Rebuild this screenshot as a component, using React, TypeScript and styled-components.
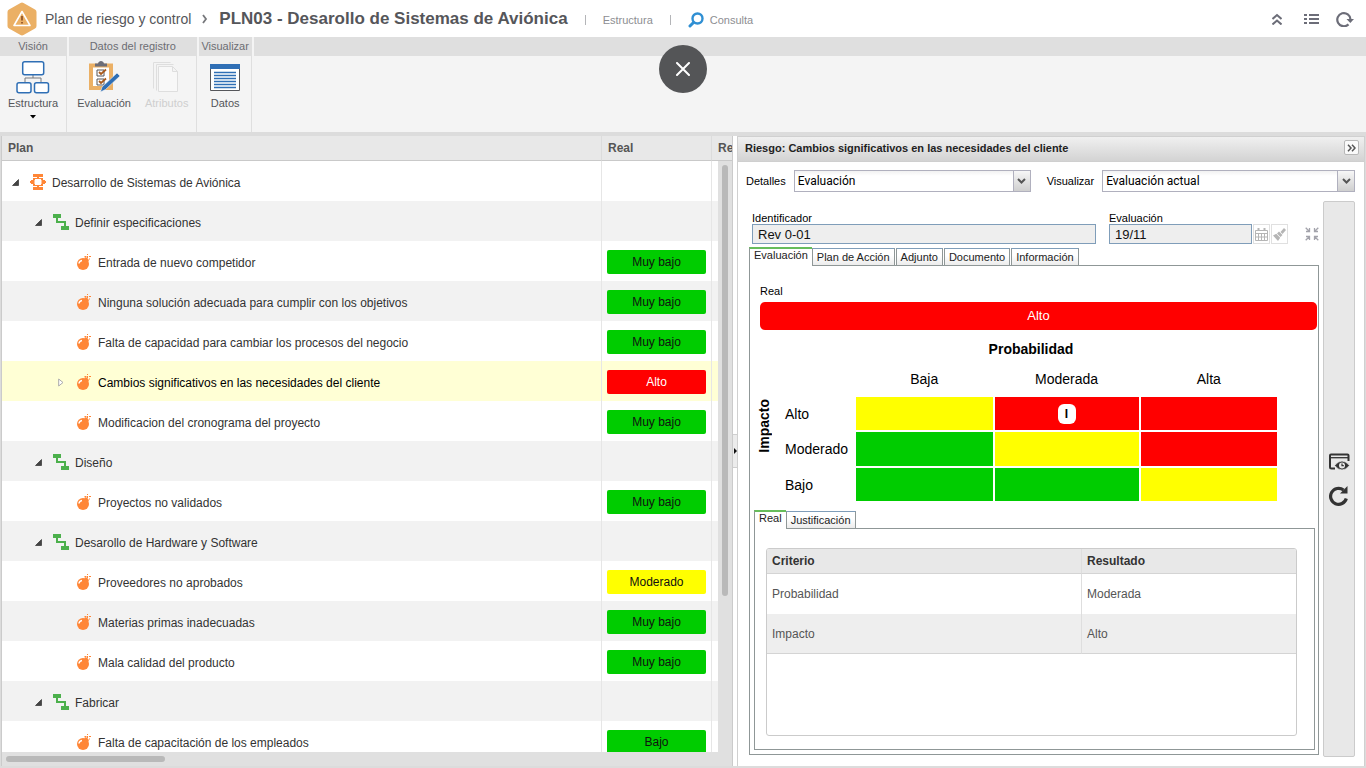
import React from "react";
import styled, { createGlobalStyle, css } from "styled-components";

const GlobalStyle = createGlobalStyle`
  *, *::before, *::after { box-sizing: border-box; }
  body {
    margin: 0;
    background: #dcdcdc;
    font-family: "Liberation Sans", Arial, sans-serif;
    font-size: 12px;
    color: #333;
  }
  button, input, select { font-family: inherit; }
  button { cursor: pointer; }
  svg { display: block; flex: none; }
`;

const Page = styled.div`
  position: relative;
  display: flex;
  flex-direction: column;
  height: 100vh;
  overflow: hidden;
`;

/* ---------- top bar ---------- */

const TopBar = styled.header`
  display: flex;
  align-items: center;
  height: 37px;
  flex: none;
  padding: 0 4px 0 7px;
  background: #fff;
`;

const Crumb = styled.a`
  margin-left: 8px;
  font-size: 14px;
  line-height: 20px;
  color: #55565a;
  text-decoration: none;
`;

const CrumbMark = styled.span`
  display: flex;
  margin: 0 11px;
`;

const Title = styled.h1`
  margin: 0;
  font-size: 17px;
  line-height: 20px;
  color: #55565a;
  white-space: nowrap;
`;

const TopLinks = styled.nav`
  display: flex;
  align-items: center;
  margin-left: 17px;
  padding-top: 2px;
`;

const TopLink = styled.a`
  display: flex;
  align-items: center;
  gap: 6px;
  margin: 0 17px;
  font-size: 11px;
  line-height: 16px;
  color: #8d8e92;
  text-decoration: none;
`;

const Separator = styled.span`
  width: 1px;
  height: 10px;
  background: #b4b5b8;
`;

const PlainButton = styled.button`
  display: flex;
  align-items: center;
  justify-content: center;
  padding: 0;
  border: 0;
  background: none;
`;

const TopActions = styled.div`
  display: flex;
  align-items: center;
  margin-left: auto;
`;

const TopAction = styled(PlainButton)`
  width: 34px;
  height: 24px;
`;

/* ---------- ribbon ---------- */

const Ribbon = styled.section`
  display: flex;
  gap: 2px;
  height: 95px;
  flex: none;
  background: #f4f4f4;
`;

const Group = styled.div<{ $grow?: boolean }>`
  display: flex;
  flex-direction: column;
  flex: ${(p) => (p.$grow ? "1" : "none")};
  border-right: ${(p) => (p.$grow ? "0" : "1px solid #dfdfdf")};
`;

const GroupTitle = styled.h2`
  height: 19px;
  margin: 0;
  padding: 0 2px;
  background: #dfdfdf;
  font-size: 11px;
  font-weight: normal;
  line-height: 19px;
  text-align: center;
  color: #6c6d73;
`;

const GroupItems = styled.div`
  display: flex;
  gap: 14px;
  justify-content: center;
  padding: 4px 8px 0;
`;

const Tool = styled.button`
  display: flex;
  flex-direction: column;
  align-items: center;
  gap: 2px;
  padding: 0;
  border: 0;
  background: none;
  font-size: 11px;
  line-height: 14px;
  color: #55565a;
  &:disabled { color: #cfcfcf; cursor: default; }
`;

const ToolCaret = styled.span`
  display: flex;
  padding-top: 3px;
`;

const CloseButton = styled.button`
  position: absolute;
  z-index: 5;
  top: 45px;
  left: 50%;
  display: flex;
  align-items: center;
  justify-content: center;
  width: 48px;
  height: 48px;
  margin-left: -24px;
  padding: 0;
  border: 0;
  border-radius: 50%;
  background: #545557;
`;

/* ---------- workspace ---------- */

const Workspace = styled.main`
  display: grid;
  grid-template-columns: minmax(0, 732fr) 4px minmax(0, 628fr);
  flex: 1;
  min-height: 0;
  padding: 4px 1px 2px 1px;
`;

const TreePane = styled.section`
  position: relative;
  display: flex;
  flex-direction: column;
  min-height: 0;
  border: solid #cbcbcb;
  border-width: 0 1px 0 1px;
  background: #fff;
`;

const TreeView = styled.div`
  flex: 1;
  min-height: 0;
  overflow: hidden;
`;

const TreeTable = styled.table`
  width: 100%;
  table-layout: fixed;
  border-collapse: separate;
  border-spacing: 0;
`;

const TreeHead = styled.th<{ $width?: number }>`
  width: ${(p) => (p.$width ? `${p.$width}px` : "auto")};
  height: 25px;
  padding: 0 6px;
  border-right: 1px solid #dcdcdc;
  border-bottom: 1px solid #c9c9c9;
  background: #e8e8e8;
  font-size: 12px;
  text-align: left;
  color: #555;
  overflow: hidden;
  white-space: nowrap;
  &:last-child { border-right: 0; padding-right: 0; }
`;

const TreeRow = styled.tr<{ $tone: "plain" | "band" | "picked" }>`
  background: ${(p) =>
    p.$tone === "picked" ? "#ffffd5" : p.$tone === "band" ? "#f2f2f2" : "#fff"};
  color: ${(p) => (p.$tone === "picked" ? "#000" : "#333")};
`;

const TreeCell = styled.td`
  height: 40px;
  padding: 2px 5px 0;
  border-right: 1px solid #e6e6e6;
  &:last-child { border-right: 0; }
`;

const Node = styled.div<{ $level: number }>`
  display: flex;
  align-items: center;
  gap: 6px;
  padding-left: ${(p) => 5 + p.$level * 23}px;
  white-space: nowrap;
`;

const NodeName = styled.span`
  padding-top: 2px;
  line-height: 16px;
`;

const Toggle = styled.span`
  display: flex;
  width: 12px;
`;

const tones = { green: "#00cc00", red: "#ff0000", yellow: "#ffff00" };
type Tone = keyof typeof tones;

const Badge = styled.div<{ $tone: Tone }>`
  height: 24px;
  border-radius: 2px;
  background: ${(p) => tones[p.$tone]};
  color: ${(p) => (p.$tone === "red" ? "#fff" : "#111")};
  line-height: 24px;
  text-align: center;
`;

const VTrack = styled.div`
  position: absolute;
  top: 25px;
  right: 0;
  bottom: 14px;
  width: 14px;
  padding: 4px;
  background: #e0e0e0;
`;

const VThumb = styled.div`
  height: 74%;
  border-radius: 3px;
  background: #b9b9b9;
`;

const HTrack = styled.div`
  height: 14px;
  flex: none;
  padding: 4px;
  background: #e0e0e0;
`;

const HThumb = styled.div`
  width: 22%;
  height: 6px;
  border-radius: 3px;
  background: #b9b9b9;
`;

const Splitter = styled.div`
  display: flex;
  align-items: center;
  background: #fff;
`;

const Grip = styled.button`
  display: flex;
  align-items: center;
  width: 4px;
  height: 34px;
  padding: 0;
  border: solid #cfcfcf;
  border-width: 1px 0;
  background: #ececec;
`;

/* ---------- detail pane ---------- */

const DetailPane = styled.section`
  display: flex;
  flex-direction: column;
  min-height: 0;
  border: solid #d0d0d0;
  border-width: 1px 1px 0 1px;
  background: #fff;
`;

const DetailHead = styled.div`
  display: flex;
  align-items: center;
  justify-content: space-between;
  height: 25px;
  flex: none;
  padding: 0 5px 3px 7px;
  border-bottom: 1px solid #cfcfcf;
  background: linear-gradient(#f0f0f0, #d3d3d3);
`;

const DetailTitle = styled.h2`
  margin: 0;
  font-size: 11px;
  color: #222;
`;

const ExpandButton = styled(PlainButton)`
  width: 15px;
  height: 15px;
  border: 1px solid #b8b8b8;
  border-radius: 2px;
  background: #fafafa;
`;

const Filters = styled.div`
  display: flex;
  align-items: center;
  gap: 8px;
  padding: 8px 9px 9px 8px;
`;

const FieldLabel = styled.label`
  font-size: 11px;
  line-height: 12px;
  color: #000;
`;

const SelectBox = styled.div<{ $grow: number }>`
  position: relative;
  flex: ${(p) => p.$grow} 1 0;
  & + label { margin-left: 8px; }
`;

const Select = styled.select`
  display: block;
  width: 100%;
  height: 22px;
  padding: 0 20px 0 3px;
  border: 1px solid #b0b0be;
  border-radius: 0;
  appearance: none;
  background: linear-gradient(#f2f2f2, #fff 5px);
  font-family: Roboto, sans-serif;
  font-size: 12px;
  color: #000;
`;

const SelectArrow = styled.span`
  position: absolute;
  top: 1px;
  right: 1px;
  bottom: 1px;
  display: flex;
  align-items: center;
  justify-content: center;
  width: 17px;
  border-left: 1px solid #b0b0be;
  background: linear-gradient(#f7f7f7, #cfcfcf);
  pointer-events: none;
`;

const DetailBody = styled.div`
  display: flex;
  gap: 4px;
  flex: 1;
  min-height: 0;
  padding: 0 9px 9px 11px;
`;

const Form = styled.div`
  display: flex;
  flex-direction: column;
  flex: 1;
  min-width: 0;
  padding: 11px 0 2px;
`;

const SideBar = styled.aside`
  display: flex;
  flex-direction: column;
  align-items: center;
  justify-content: center;
  gap: 14px;
  width: 32px;
  border: 1px solid #cbcbcb;
  border-radius: 2px;
  background: #e8e8e8;
`;

const Fields = styled.div`
  display: flex;
  align-items: flex-end;
  padding: 0 0 3px 3px;
`;

const Field = styled.div<{ $grow: number }>`
  display: flex;
  flex-direction: column;
  flex: ${(p) => p.$grow} 1 0;
  & + & { margin-left: 13px; }
`;

const TextInput = styled.input`
  width: 100%;
  height: 20px;
  padding: 0 5px;
  border: 1px solid #7f9db9;
  border-radius: 0;
  background: #eee;
  font-size: 13px;
  color: #111;
`;

const IconButton = styled(PlainButton)`
  width: 17px;
  height: 20px;
  margin-left: 1px;
  border: 1px solid #e0e0e0;
`;

const ShrinkButton = styled(PlainButton)`
  height: 20px;
  margin-left: 17px;
`;

const Tabs = styled.div`
  position: relative;
  z-index: 1;
  display: flex;
  align-items: flex-end;
  gap: 1px;
  margin-bottom: -1px;
`;

const Tab = styled.button<{ $active?: boolean }>`
  height: 18px;
  padding: 0 4px;
  border: 1px solid #8f9797;
  border-top-color: #7f9db9;
  background: linear-gradient(#fff 40%, #ececec);
  font-size: 11px;
  line-height: 16px;
  color: #222;
  white-space: nowrap;
  ${(p) =>
    p.$active &&
    css`
      height: 19px;
      margin-right: -1px;
      padding-bottom: 5px;
      border-top: 2px solid #67bd5b;
      border-right: 0;
      border-bottom: 0;
      background: #fff;
      line-height: 12px;
    `}
`;

const OuterPanel = styled.div`
  display: flex;
  flex-direction: column;
  flex: 1;
  min-height: 0;
  padding: 18px 3px 4px 4px;
  border: 1px solid #8f9797;
`;

const ResultTitle = styled.h3`
  margin: 0 0 4px 6px;
  font-size: 11px;
  font-weight: normal;
  line-height: 14px;
  color: #000;
`;

const ResultBar = styled.div`
  height: 28px;
  flex: none;
  margin: 0 -2px 4px 6px;
  border-radius: 5px;
  background: #f00;
  font-size: 13px;
  line-height: 28px;
  text-align: center;
  color: #fff;
`;

const MatrixWrap = styled.div`
  flex: none;
  padding-right: 36px;
`;

const Matrix = styled.table`
  width: 100%;
  table-layout: fixed;
  border-spacing: 2px;
  font-size: 14px;
  color: #000;
  th, td { padding: 0; }
  thead th { padding-bottom: 2px; }
  tbody tr:nth-child(2) th { height: 34px; }
`;

const MatrixCol = styled.col<{ $width?: number }>`
  width: ${(p) => (p.$width ? `${p.$width}px` : "auto")};
`;

const AxisX = styled.th`
  height: 27px;
`;

const Level = styled.th`
  height: 30px;
  font-weight: normal;
`;

const RowLevel = styled.th`
  height: 33px;
  font-weight: normal;
  text-align: left;
`;

const AxisY = styled.th`
  vertical-align: middle;
`;

const Upright = styled.span`
  display: inline-block;
  margin: 0 12px 44px 0;
  writing-mode: vertical-rl;
  transform: rotate(180deg);
`;

const MatrixCell = styled.td<{ $tone: Tone }>`
  height: 33px;
  background: ${(p) => tones[p.$tone]};
  text-align: center;
`;

const Marker = styled.span`
  display: inline-block;
  width: 18px;
  border-radius: 6px;
  background: #fff;
  font-size: 12px;
  font-weight: bold;
  line-height: 20px;
`;

const InnerTabs = styled(Tabs)`
  flex: none;
  margin-top: 7px;
`;

const InnerPanel = styled.div`
  flex: 1;
  min-height: 0;
  padding: 19px 17px 13px 11px;
  border: 1px solid #8f9797;
`;

const CriteriaBox = styled.div`
  height: 100%;
  border: 1px solid #cbcbcb;
  border-radius: 3px;
  overflow: hidden;
`;

const Criteria = styled.table`
  width: 100%;
  table-layout: fixed;
  border-collapse: separate;
  border-spacing: 0;
  th, td {
    padding: 0 5px;
    text-align: left;
    font-size: 12px;
  }
  th:first-child, td:first-child { border-right: 1px solid #dedede; }
  th:last-child { width: 214px; }
  th {
    height: 25px;
    border-bottom: 1px solid #d4d4d4;
    background: #e8e8e8;
    color: #333;
  }
  td { height: 40px; color: #555; }
  tr:last-child td { background: #eee; border-bottom: 1px solid #d4d4d4; }
`;

/* ---------- icons ---------- */

const LogoIcon = () => (
  <svg width="30" height="34" viewBox="0 0 30 34">
    <path d="M13.500 1a3 3 0 0 1 3 0l11.500 6.400a3 3 0 0 1 1.500 2.600v14a3 3 0 0 1-1.500 2.600l-11.500 6.400a3 3 0 0 1-3 0L2 26.600A3 3 0 0 1 .5 24V10A3 3 0 0 1 2 7.400z" fill="#ebb065" />
    <path d="M15 9.500L23 23.500H7z" fill="none" stroke="#fff" strokeWidth="1.600" strokeLinejoin="round" />
    <path d="M15 14v4.500M15 20v1.500" stroke="#8a4a20" strokeWidth="1.600" />
  </svg>
);

const CrumbIcon = () => (
  <svg width="6" height="10" viewBox="0 0 6 10">
    <path d="M1 1l3 4-3 4" fill="none" stroke="#77787c" strokeWidth="1.800" />
  </svg>
);

const SearchIcon = () => (
  <svg width="16" height="16" viewBox="0 0 16 16" fill="none" stroke="#2f8fd3">
    <circle cx="9.500" cy="6.500" r="5" strokeWidth="2.400" />
    <path d="M5.500 10.500L2 14" strokeWidth="3" strokeLinecap="round" />
  </svg>
);

const UpIcon = () => (
  <svg width="10" height="12" viewBox="0 0 10 12" fill="none" stroke="#6c6d78" strokeWidth="2">
    <path d="M.5 6L5 2l4.500 4M.5 11.500L5 7.500l4.500 4" />
  </svg>
);

const ListIcon = () => (
  <svg width="15" height="12" viewBox="0 0 15 12" fill="#6c6d78">
    <path d="M0 1h3v2H0zM5 1h10v2H5zM0 5h3v2H0zM5 5h10v2H5zM0 9h3v2H0zM5 9h10v2H5z" />
  </svg>
);

const RefreshIcon = () => (
  <svg width="18" height="16" viewBox="0 0 18 16">
    <path d="M12.500 13.400A6.600 6.600 0 1 1 14.500 8.500" fill="none" stroke="#6c6d78" strokeWidth="2.200" />
    <path d="M10.500 8H18l-3.700 4z" fill="#6c6d78" />
  </svg>
);

const StructureIcon = () => (
  <svg width="34" height="34" viewBox="0 0 34 34" fill="#fff" stroke="#2f6fb5" strokeWidth="1.500">
    <path d="M17 15v3M9 22v-4h16v4" fill="none" stroke="#77787c" strokeWidth="1" />
    <rect x="6.700" y="1.700" width="21" height="13" rx="2" />
    <rect x="1" y="22.700" width="14" height="10" rx="2" />
    <rect x="18.500" y="22.700" width="14" height="10" rx="2" />
  </svg>
);

const EvaluateIcon = () => (
  <svg width="34" height="34" viewBox="0 0 34 34">
    <path d="M4 5.500h20V28H4z" fill="#fff" stroke="#ebb065" strokeWidth="4" />
    <path d="M8 6.500V3.500h3C11.500 0 16.500 0 17 3.500h3v3z" fill="#6c6d78" />
    <path d="M10 10h7v6h-7zM10 19h7v6h-7z" fill="none" stroke="#55565a" />
    <path d="M12 12l2 2 5-4.500M12 21l2 2 5-4.500" fill="none" stroke="#a85a1c" strokeWidth="1.800" />
    <path d="M30 13l3 3L18.500 29.500 13.500 32l1.500-5z" fill="#2f6fb5" stroke="#f4f4f4" strokeWidth=".6" />
  </svg>
);

const AttributesIcon = () => (
  <svg width="34" height="34" viewBox="0 0 34 34" fill="#f8f8f8" stroke="#dedede">
    <path d="M3.500 28.500v-26h17M6.500 30.500v-26h17" fill="none" />
    <path d="M8.500 6.500h14l5 5v20h-19zM22.500 6.500v5h5" />
  </svg>
);

const DataIcon = () => (
  <svg width="34" height="34" viewBox="0 0 34 34">
    <path d="M2.500 4.500h29v26h-29z" fill="#fff" stroke="#55565a" />
    <path d="M2 4h30v5H2z" fill="#2f6fb5" />
    <path d="M6 12.500h22M6 15.500h22M6 18.500h22M6 21.500h22M6 24.500h22M6 27.500h22" stroke="#2f6fb5" strokeWidth="1.500" />
  </svg>
);

const CaretIcon = () => (
  <svg width="6" height="4" viewBox="0 0 6 4"><path d="M0 0h6L3 3.500z" fill="#000" /></svg>
);

const CrossIcon = () => (
  <svg width="14" height="14" viewBox="0 0 14 14" stroke="#fff" strokeWidth="2" strokeLinecap="round">
    <path d="M1 1l12 12M13 1L1 13" />
  </svg>
);

const OpenIcon = () => (
  <svg width="7" height="7" viewBox="0 0 7 7"><path d="M6.500 .5v6H.5z" fill="#444" stroke="#222" strokeWidth=".6" /></svg>
);

const ShutIcon = () => (
  <svg width="6" height="9" viewBox="0 0 6 9"><path d="M.7 1v7l4.300-3.500z" fill="#fff" stroke="#aaa" /></svg>
);

const PlanIcon = () => (
  <svg width="16" height="16" viewBox="0 0 16 16" fill="#ff8637">
    <path d="M3 0h10v3H9v1h4v2h2v1h1v2h-1v1h-2v2H9v1h4v3H3v-3h4v-1H3v-2H1V9H0V7h1V6h2V4h4V3H3zM5 5v1H4.500v4H5v1h6v-1h.5V6H11V5z" fillRule="evenodd" />
  </svg>
);

const StageIcon = () => (
  <svg width="16" height="16" viewBox="0 0 16 16" fill="#4cb04c">
    <path d="M0 0h8v4H5v3h8v5h3v4H8v-4h3V9H3V4H0z" />
  </svg>
);

const BombIcon = () => (
  <svg width="16" height="16" viewBox="0 0 16 16">
    <circle cx="7" cy="10" r="6" fill="#ff8637" />
    <path d="M8 4l2-1 3 3-1 2z" fill="#ff8637" />
    <path d="M11.500 4.500V2M8.500 2.500h2M13 2.500h2M11.500 0v1M13.500 4.500v1" stroke="#ff8637" fill="none" />
    <path d="M3 9.500A3.500 3.500 0 0 1 6 6.500" stroke="#fff" strokeWidth="1.500" fill="none" />
  </svg>
);

const GripIcon = () => (
  <svg width="4" height="6" viewBox="0 0 4 6"><path d="M1 0v6l3-3z" fill="#111" /></svg>
);

const ExpandIcon = () => (
  <svg width="9" height="8" viewBox="0 0 9 8" fill="none" stroke="#555" strokeWidth="1.500">
    <path d="M1 .8L4 4 1 7.200M5 .8L8 4 5 7.200" />
  </svg>
);

const DropIcon = () => (
  <svg width="9" height="6" viewBox="0 0 9 6"><path d="M1 1l3.500 3.500L8 1" fill="none" stroke="#555" strokeWidth="2" /></svg>
);

const CalendarIcon = () => (
  <svg width="13" height="13" viewBox="0 0 13 13" fill="none" stroke="#b5b5b5">
    <path d="M.5 2.500h12v10H.5zM.5 5.500h12M.5 9h12M3.500 5v7M6.500 5v7M9.500 5v7" />
    <path d="M3.500 0v3M9.500 0v3" strokeWidth="2" />
  </svg>
);

const BrushIcon = () => (
  <svg width="13" height="13" viewBox="0 0 13 13" fill="#b5b5b5">
    <path d="M11 0l2 2-3.500 4L7.500 4z" />
    <path d="M6 3.500L9.500 7 7.500 9 4 5.500zM3.300 5.800L7.200 9.700 5 13 0 7.500z" />
  </svg>
);

const ShrinkIcon = () => (
  <svg width="14" height="14" viewBox="0 0 14 14" fill="none" stroke="#a3a3ab" strokeWidth="1.300">
    <path d="M.7.7L4.500 4.500M4.500 1v3.500H1M13.300.7L9.500 4.500M9.500 1v3.500H13M.7 13.300L4.500 9.500M4.500 13V9.500H1M13.300 13.300L9.500 9.500M9.500 13V9.500H13" />
  </svg>
);

const PreviewIcon = () => (
  <svg width="21" height="18" viewBox="0 0 21 18">
    <path d="M6 15.500H2.500Q1 15.500 1 14V2.500Q1 1.500 2 1.500h16.500Q19.500 1.500 19.500 2.500V8" fill="none" stroke="#333" strokeWidth="2" />
    <path d="M1 4.700h18.500" stroke="#333" strokeWidth="1.300" />
    <path d="M5.500 12.500q7.500-9 15 0q-7.500 9-15 0z" fill="#333" stroke="#e8e8e8" strokeWidth=".8" />
    <circle cx="13" cy="12.500" r="3" fill="#e8e8e8" />
    <path d="M13 10.500v2.200h1.800" fill="none" stroke="#333" strokeWidth="1.200" />
  </svg>
);

const ReloadIcon = () => (
  <svg width="20" height="21" viewBox="0 0 20 21">
    <path d="M17.300 13.500A8 8 0 1 1 14.500 5" fill="none" stroke="#333" strokeWidth="3.200" />
    <path d="M18.500 1v7.500H11z" fill="#333" />
  </svg>
);

/* ---------- data ---------- */

type Item = { level: number; name: string; status?: string; tone?: Tone; picked?: boolean };

const items: Item[] = [
  { level: 0, name: "Desarrollo de Sistemas de Aviónica" },
  { level: 1, name: "Definir especificaciones" },
  { level: 2, name: "Entrada de nuevo competidor", status: "Muy bajo", tone: "green" },
  { level: 2, name: "Ninguna solución adecuada para cumplir con los objetivos", status: "Muy bajo", tone: "green" },
  { level: 2, name: "Falta de capacidad para cambiar los procesos del negocio", status: "Muy bajo", tone: "green" },
  { level: 2, name: "Cambios significativos en las necesidades del cliente", status: "Alto", tone: "red", picked: true },
  { level: 2, name: "Modificacion del cronograma del proyecto", status: "Muy bajo", tone: "green" },
  { level: 1, name: "Diseño" },
  { level: 2, name: "Proyectos no validados", status: "Muy bajo", tone: "green" },
  { level: 1, name: "Desarollo de Hardware y Software" },
  { level: 2, name: "Proveedores no aprobados", status: "Moderado", tone: "yellow" },
  { level: 2, name: "Materias primas inadecuadas", status: "Muy bajo", tone: "green" },
  { level: 2, name: "Mala calidad del producto", status: "Muy bajo", tone: "green" },
  { level: 1, name: "Fabricar" },
  { level: 2, name: "Falta de capacitación de los empleados", status: "Bajo", tone: "green" },
];

const matrix: { name: string; cells: Tone[] }[] = [
  { name: "Alto", cells: ["yellow", "red", "red"] },
  { name: "Moderado", cells: ["green", "yellow", "red"] },
  { name: "Bajo", cells: ["green", "green", "yellow"] },
];

const nodeIcons = [PlanIcon, StageIcon, BombIcon];

function Tree() {
  return (
    <TreePane>
      <TreeView>
        <TreeTable>
          <thead>
            <tr>
              <TreeHead>Plan</TreeHead>
              <TreeHead $width={110}>Real</TreeHead>
              <TreeHead $width={20}>Re</TreeHead>
            </tr>
          </thead>
          <tbody>
            {items.map((item, i) => {
              const Icon = nodeIcons[item.level];
              return (
                <TreeRow key={item.name} $tone={item.picked ? "picked" : i % 2 ? "band" : "plain"}>
                  <TreeCell>
                    <Node $level={item.level}>
                      <Toggle>{item.level < 2 ? <OpenIcon /> : item.picked ? <ShutIcon /> : null}</Toggle>
                      <Icon />
                      <NodeName>{item.name}</NodeName>
                    </Node>
                  </TreeCell>
                  <TreeCell>{item.tone && <Badge $tone={item.tone}>{item.status}</Badge>}</TreeCell>
                  <TreeCell />
                </TreeRow>
              );
            })}
          </tbody>
        </TreeTable>
      </TreeView>
      <VTrack><VThumb /></VTrack>
      <HTrack><HThumb /></HTrack>
    </TreePane>
  );
}

function RiskMatrix() {
  return (
    <MatrixWrap>
      <Matrix>
        <colgroup>
          <MatrixCol $width={27} />
          <MatrixCol $width={69} />
          <MatrixCol />
          <MatrixCol $width={144} />
          <MatrixCol />
        </colgroup>
        <thead>
          <tr>
            <td />
            <AxisX colSpan={4}>Probabilidad</AxisX>
          </tr>
          <tr>
            <td />
            <td />
            <Level scope="col">Baja</Level>
            <Level scope="col">Moderada</Level>
            <Level scope="col">Alta</Level>
          </tr>
        </thead>
        <tbody>
          {matrix.map((row, r) => (
            <tr key={row.name}>
              {r === 0 && <AxisY rowSpan={3}><Upright>Impacto</Upright></AxisY>}
              <RowLevel scope="row">{row.name}</RowLevel>
              {row.cells.map((tone, c) => (
                <MatrixCell key={c} $tone={tone}>{r === 0 && c === 1 && <Marker>I</Marker>}</MatrixCell>
              ))}
            </tr>
          ))}
        </tbody>
      </Matrix>
    </MatrixWrap>
  );
}

function Detail() {
  return (
    <DetailPane>
      <DetailHead>
        <DetailTitle>Riesgo: Cambios significativos en las necesidades del cliente</DetailTitle>
        <ExpandButton aria-label="Contraer panel"><ExpandIcon /></ExpandButton>
      </DetailHead>
      <Filters>
        <FieldLabel htmlFor="details">Detalles</FieldLabel>
        <SelectBox $grow={237}>
          <Select id="details"><option>Evaluación</option></Select>
          <SelectArrow><DropIcon /></SelectArrow>
        </SelectBox>
        <FieldLabel htmlFor="view">Visualizar</FieldLabel>
        <SelectBox $grow={253}>
          <Select id="view"><option>Evaluación actual</option></Select>
          <SelectArrow><DropIcon /></SelectArrow>
        </SelectBox>
      </Filters>
      <DetailBody>
        <Form>
          <Fields>
            <Field $grow={344}>
              <FieldLabel htmlFor="ident">Identificador</FieldLabel>
              <TextInput id="ident" readOnly value="Rev 0-01" />
            </Field>
            <Field $grow={143}>
              <FieldLabel htmlFor="evaluated">Evaluación</FieldLabel>
              <TextInput id="evaluated" readOnly value="19/11" />
            </Field>
            <IconButton aria-label="Calendario"><CalendarIcon /></IconButton>
            <IconButton aria-label="Limpiar"><BrushIcon /></IconButton>
            <ShrinkButton aria-label="Reducir"><ShrinkIcon /></ShrinkButton>
          </Fields>
          <Tabs role="tablist">
            <Tab role="tab" aria-selected $active>Evaluación</Tab>
            <Tab role="tab">Plan de Acción</Tab>
            <Tab role="tab">Adjunto</Tab>
            <Tab role="tab">Documento</Tab>
            <Tab role="tab">Información</Tab>
          </Tabs>
          <OuterPanel>
            <ResultTitle>Real</ResultTitle>
            <ResultBar>Alto</ResultBar>
            <RiskMatrix />
            <InnerTabs role="tablist">
              <Tab role="tab" aria-selected $active>Real</Tab>
              <Tab role="tab">Justificación</Tab>
            </InnerTabs>
            <InnerPanel>
              <CriteriaBox>
                <Criteria>
                  <thead>
                    <tr><th>Criterio</th><th>Resultado</th></tr>
                  </thead>
                  <tbody>
                    <tr><td>Probabilidad</td><td>Moderada</td></tr>
                    <tr><td>Impacto</td><td>Alto</td></tr>
                  </tbody>
                </Criteria>
              </CriteriaBox>
            </InnerPanel>
          </OuterPanel>
        </Form>
        <SideBar>
          <PlainButton aria-label="Vista previa"><PreviewIcon /></PlainButton>
          <PlainButton aria-label="Recargar"><ReloadIcon /></PlainButton>
        </SideBar>
      </DetailBody>
    </DetailPane>
  );
}

export default function App() {
  return (
    <Page>
      <GlobalStyle />
      <TopBar>
        <LogoIcon />
        <Crumb href="#plan">Plan de riesgo y control</Crumb>
        <CrumbMark><CrumbIcon /></CrumbMark>
        <Title>PLN03 - Desarollo de Sistemas de Aviónica</Title>
        <TopLinks>
          <Separator />
          <TopLink href="#estructura">Estructura</TopLink>
          <Separator />
          <TopLink href="#consulta"><SearchIcon />Consulta</TopLink>
        </TopLinks>
        <TopActions>
          <TopAction aria-label="Ocultar cinta"><UpIcon /></TopAction>
          <TopAction aria-label="Lista"><ListIcon /></TopAction>
          <TopAction aria-label="Actualizar"><RefreshIcon /></TopAction>
        </TopActions>
      </TopBar>
      <Ribbon>
        <Group>
          <GroupTitle>Visión</GroupTitle>
          <GroupItems>
            <Tool><StructureIcon />Estructura<ToolCaret><CaretIcon /></ToolCaret></Tool>
          </GroupItems>
        </Group>
        <Group>
          <GroupTitle>Datos del registro</GroupTitle>
          <GroupItems>
            <Tool><EvaluateIcon />Evaluación</Tool>
            <Tool disabled><AttributesIcon />Atributos</Tool>
          </GroupItems>
        </Group>
        <Group>
          <GroupTitle>Visualizar</GroupTitle>
          <GroupItems>
            <Tool><DataIcon />Datos</Tool>
          </GroupItems>
        </Group>
        <Group $grow>
          <GroupTitle />
        </Group>
      </Ribbon>
      <CloseButton aria-label="Cerrar"><CrossIcon /></CloseButton>
      <Workspace>
        <Tree />
        <Splitter><Grip aria-label="Contraer"><GripIcon /></Grip></Splitter>
        <Detail />
      </Workspace>
    </Page>
  );
}
